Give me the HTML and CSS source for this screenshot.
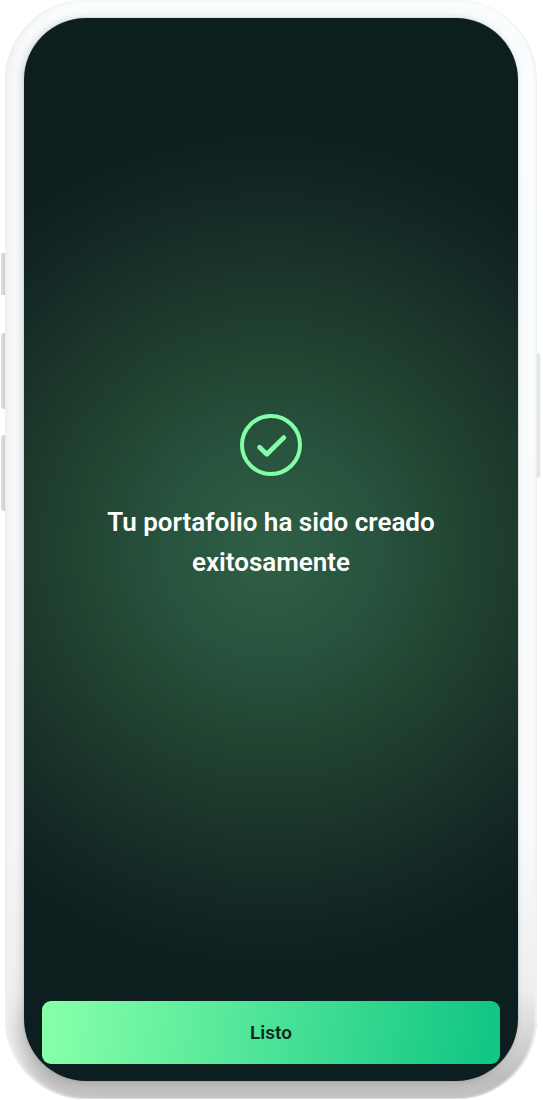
FILE: index.html
```html
<!DOCTYPE html>
<html lang="es">
<head>
<meta charset="utf-8">
<meta name="viewport" content="width=device-width, initial-scale=1">
<title>Portafolio creado</title>
<link rel="stylesheet" href="styles.css">
</head>
<body>
<div class="phone">
  <span class="key key-mute"></span>
  <span class="key key-up"></span>
  <span class="key key-down"></span>
  <span class="key key-power"></span>
  <div class="screen">
    <main class="message">
      <svg class="check" viewBox="0 0 62 62" fill="none" stroke="currentColor" aria-hidden="true">
        <circle cx="31" cy="31" r="29" stroke-width="4"/>
        <path d="M19.6 33.2 26.8 40.2 43.8 23.6" stroke-width="4.8" stroke-linecap="round" stroke-linejoin="round"/>
      </svg>
      <h1 class="title">Tu portafolio ha sido creado exitosamente</h1>
    </main>
    <button class="done" type="button">Listo</button>
  </div>
</div>
</body>
</html>
```
FILE: styles.css
```css
* {
  box-sizing: border-box;
}

body {
  margin: 0;
  min-height: 100vh;
  display: flex;
  background: #fff;
  font-family: Roboto, "Liberation Sans", sans-serif;
}

.phone {
  position: relative;
  flex: 1;
  display: flex;
  margin: 0 6px 1px 5px;
  padding: 18px 19px;
  border-radius: 80px;
  background: linear-gradient(#fafdfe 0%, #f9fbfc 75%, #eeeeee 90%, #cccccc 96%, #bdbdbd 98%, #c2c2c2 100%);
  box-shadow:
    inset 2px 0 2px #efefef,
    inset -2px 0 2px #f0f2f2,
    inset 12px 0 12px -6px #f0f0f0;
}

.screen {
  position: relative;
  flex: 1;
  display: flex;
  flex-direction: column;
  padding: 18px 18px 17px;
  border-radius: 62px;
  background: radial-gradient(circle 428px at 50% 50%, #2f5f45 0%, #28533e 25%, #214431 45%, #1b352a 65%, #142825 82%, #0d1e1e 100%);
  box-shadow: 0 0 1px #667777, -2px 0 8px rgba(0, 0, 0, 0.16);
}

.message {
  flex: 1;
  display: flex;
  flex-direction: column;
  align-items: center;
  justify-content: center;
  gap: 26px;
  padding: 0 48px 42px;
}

.check {
  width: 62px;
  height: 62px;
  color: #82ffa6;
}

.title {
  margin: 0;
  color: #fff;
  font-size: 26px;
  font-weight: 600;
  line-height: 40px;
  text-align: center;
}

.done {
  height: 63px;
  border: 0;
  border-radius: 9px;
  background: linear-gradient(98deg, #85ffa8 3%, #4be397 50%, #12c683 97%);
  color: #12281f;
  font: inherit;
  font-size: 19px;
  font-weight: 600;
}

.key {
  position: absolute;
  width: 4px;
  left: -4px;
  border-radius: 3px 0 0 3px;
  background: linear-gradient(90deg, #e2e2e2, #cbcbcb);
}

.key-mute {
  top: 253px;
  height: 42px;
  border-radius: 1px 0 0 1px;
}

.key-up {
  top: 333px;
  height: 76px;
}

.key-down {
  top: 435px;
  height: 76px;
}

.key-power {
  top: 353px;
  left: auto;
  right: -4px;
  height: 125px;
  border-radius: 0 3px 3px 0;
  background: linear-gradient(90deg, #dedede, #f3f3f3);
}
```
